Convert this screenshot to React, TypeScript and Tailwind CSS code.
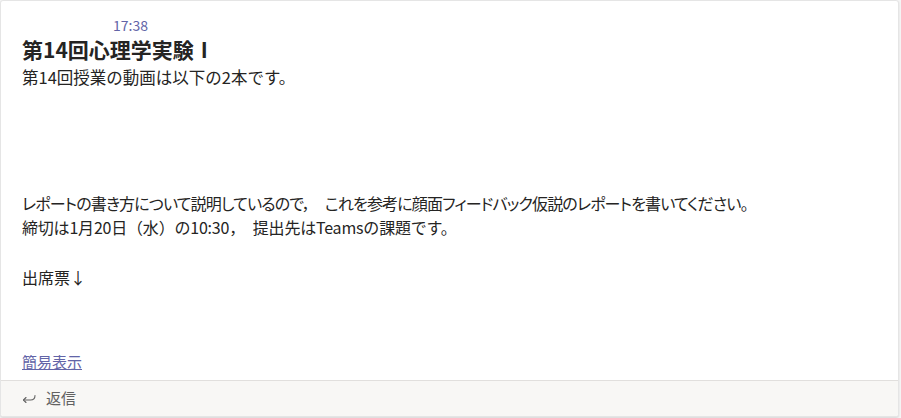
const font = "font-['Segoe_UI','Noto_Sans_CJK_JP',sans-serif]";

const ReplyIcon = () => (
  <svg width="16" height="16" viewBox="0 0 16 16" fill="none" stroke="#616161" strokeWidth="1.1" strokeLinecap="round" strokeLinejoin="round">
    <path d="M14 4.5c0 3-1.6 4.5-4.5 4.5H2.5" />
    <path d="M5 6.5L2.5 9 5 11.5" />
  </svg>
);

export default function App() {
  return (
    <div className={`w-[901px] h-[418px] bg-[#f5f5f5] ${font}`}>
      <div className="w-[899px] h-[417px] flex flex-col bg-white border border-[#e5e5e5] rounded-[3px] shadow-[0_1px_2px_rgba(0,0,0,0.12)] overflow-hidden">
        <div className="flex-1 flex flex-col pl-[21px] pt-[16px]">
          <div className="pl-[91px] text-[14px] leading-4 text-[#6264a7]">17:38</div>
          <h1 className="mt-[3px] text-[21px] leading-[26px] font-bold text-[#252423]">第14回心理学実験Ⅰ</h1>
          <div className="mt-[3px] text-[16px] leading-[24px] text-[#252423]">
            <p className="text-[16.5px]">第14回授業の動画は以下の2本です。</p>
            <p className="h-[102px]" />
            <p className="[font-feature-settings:'palt'] tracking-[-0.85px]">レポートの書き方について説明しているので，　これを参考に顔面フィードバック仮説のレポートを書いてください。</p>
            <p className="tracking-[-0.2px]">締切は1月20日（水）の10:30，　提出先はTeamsの課題です。</p>
            <p className="h-[26px]" />
            <p>出席票↓</p>
          </div>
          <a href="#" className="mt-[63px] w-fit text-[15px] leading-5 text-[#6264a7] underline">簡易表示</a>
        </div>
        <div className="h-[36px] shrink-0 flex items-center gap-[9px] pl-[20px] bg-[#f8f7f5] border-t border-[#e1dfdd] text-[15px] text-[#616161]">
          <ReplyIcon />
          <span>返信</span>
        </div>
      </div>
    </div>
  );
}
